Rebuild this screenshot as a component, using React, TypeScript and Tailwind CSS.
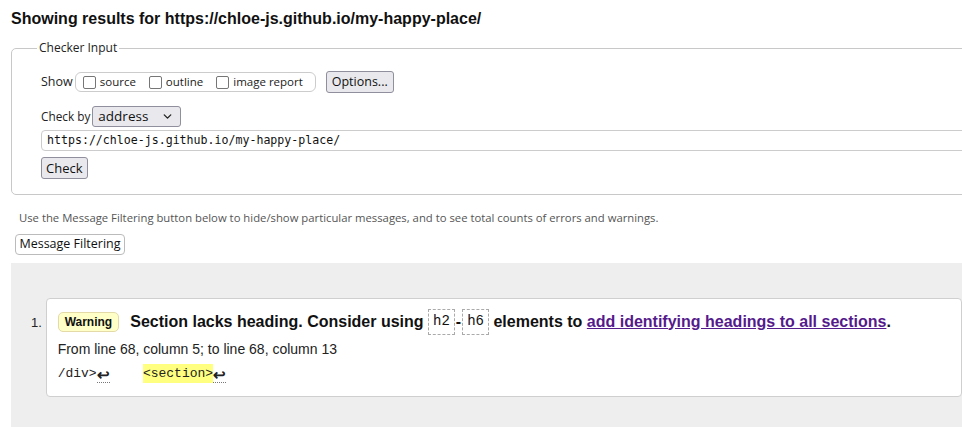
import { ChevronDown } from "lucide-react"

const ui = "font-['Open_Sans','Noto_Sans',sans-serif]"
const arial = "font-['Liberation_Sans',Arial,sans-serif]"
const mono = "font-['Liberation_Mono','Courier_New',monospace]"

function Box({ label }: { label: string }) {
    return (
        <label className="flex items-center gap-[4px] mr-[13px] last:mr-0">
            <span className="w-[13px] h-[13px] border border-[#767676] rounded-[2px] bg-white" />
            <span className="text-[11.5px] text-[#222]">{label}</span>
        </label>
    )
}

function Ret() {
    return (
        <span className={`${arial} inline-block border-b border-dotted border-[#777] leading-[15px] text-[15px] font-bold`}>
            ↩
        </span>
    )
}

export default function App() {
    return (
        <div className="w-[962px] h-[427px] overflow-hidden bg-white text-black">
            <h2 className={`${arial} font-bold text-[16px] leading-[19px] pt-[9px] pl-[11px] text-[#111]`}>
                Showing results for https://chloe-js.github.io/my-happy-place/
            </h2>

            {/* Checker input */}
            <fieldset className={`${ui} w-[1000px] ml-[11px] mt-[12px] border border-[#c8c8c8] rounded-[5px] pl-[29px] pt-[15px] pb-[15px]`}>
                <legend className="text-[12px] text-[#222] ml-[-4px] px-[2px] leading-[16px]">Checker Input</legend>

                <div className="flex items-center h-[22px]">
                    <span className="text-[12.5px] text-[#222] mr-[2px]">Show</span>
                    <div className="flex items-center h-[20px] w-[241px] border border-[#ccc] rounded-[6px] pl-[7px]">
                        <Box label="source" />
                        <Box label="outline" />
                        <Box label="image report" />
                    </div>
                    <button className="ml-[10px] h-[22px] px-[5px] text-[12.5px] text-[#111] bg-[#e9e9ed] border border-[#8f8f9d] rounded-[3px] leading-none">
                        Options...
                    </button>
                </div>

                <div className="flex items-center mt-[13px] h-[21px]">
                    <span className="text-[11.8px] text-[#222] mr-[2px]">Check by</span>
                    <div className="flex items-center justify-between w-[89px] h-[21px] border border-[#8f8f9d] rounded-[3px] bg-[#e9e9ed] pl-[5px] pr-[6px]">
                        <span className="text-[13.5px] text-[#111]">address</span>
                        <ChevronDown size={13} strokeWidth={2.5} className="text-[#222]" />
                    </div>
                </div>

                <div className="mt-[3px] h-[21px] border border-[#ccc] rounded-l-[4px] flex items-center pl-[5px] text-[#111]">
                    <span className="font-['DejaVu_Sans_Mono',monospace] text-[11.6px]">https://chloe-js.github.io/my-happy-place/</span>
                </div>

                <button className="mt-[6px] h-[22px] px-[4px] text-[13px] text-[#111] bg-[#e9e9ed] border border-[#8f8f9d] rounded-[3px] leading-none">
                    Check
                </button>
            </fieldset>

            <p className={`${ui} text-[11.3px] text-[#555] pl-[19px] mt-[15px] leading-[16px]`}>
                Use the Message Filtering button below to hide/show particular messages, and to see total counts of errors and warnings.
            </p>
            <button className={`${ui} ml-[15px] mt-[8px] h-[21px] w-[110px] text-[12.5px] text-[#111] bg-white border border-[#bbb] rounded-[4px] leading-none`}>
                Message Filtering
            </button>

            {/* Results */}
            <div className={`${arial} ml-[11px] mt-[8px] bg-[#eeeeee] h-[200px] pt-[35px] pl-[20px]`}>
                <div className="flex">
                    <span className="w-[16px] pt-[15px] text-[13px] text-[#222]">1.</span>
                    <div className="w-[1000px] h-[99px] bg-white border border-[#cfcfcf] rounded-[4px] pl-[11px] pt-[9px]">
                        <div className="flex items-center h-[27px] text-[16px] font-bold text-[#111] whitespace-nowrap">
                            <span className="h-[20px] px-[6px] flex items-center bg-[#ffffc8] border border-[#e3daa8] rounded-[5px] text-[12px] mr-[11px]">
                                Warning
                            </span>
                            <span>Section lacks heading. Consider using&nbsp;</span>
                            <code className={`${mono} font-normal text-[14px] border border-dashed border-[#aaa] h-[26px] px-[4px] flex items-center`}>h2</code>
                            <span className="px-[1px]">-</span>
                            <code className={`${mono} font-normal text-[14px] border border-dashed border-[#aaa] h-[26px] px-[4px] flex items-center`}>h6</code>
                            <span>&nbsp;elements to&nbsp;</span>
                            <a className="text-[#551a8b] underline">add identifying headings to all sections</a>
                            <span>.</span>
                        </div>
                        <p className="text-[14px] text-[#222] mt-[5px] leading-[18px]">
                            From line 68, column 5; to line 68, column 13
                        </p>
                        <div className={`${mono} flex items-end text-[13px] text-[#222] mt-[7px] h-[18px] whitespace-pre`}>
                            <span>/div&gt;</span>
                            <Ret />
                            <span className="mr-[2px]">    </span>
                            <span className="bg-[#ffff80]">&lt;section&gt;</span>
                            <Ret />
                        </div>
                    </div>
                </div>
            </div>
        </div>
    )
}
